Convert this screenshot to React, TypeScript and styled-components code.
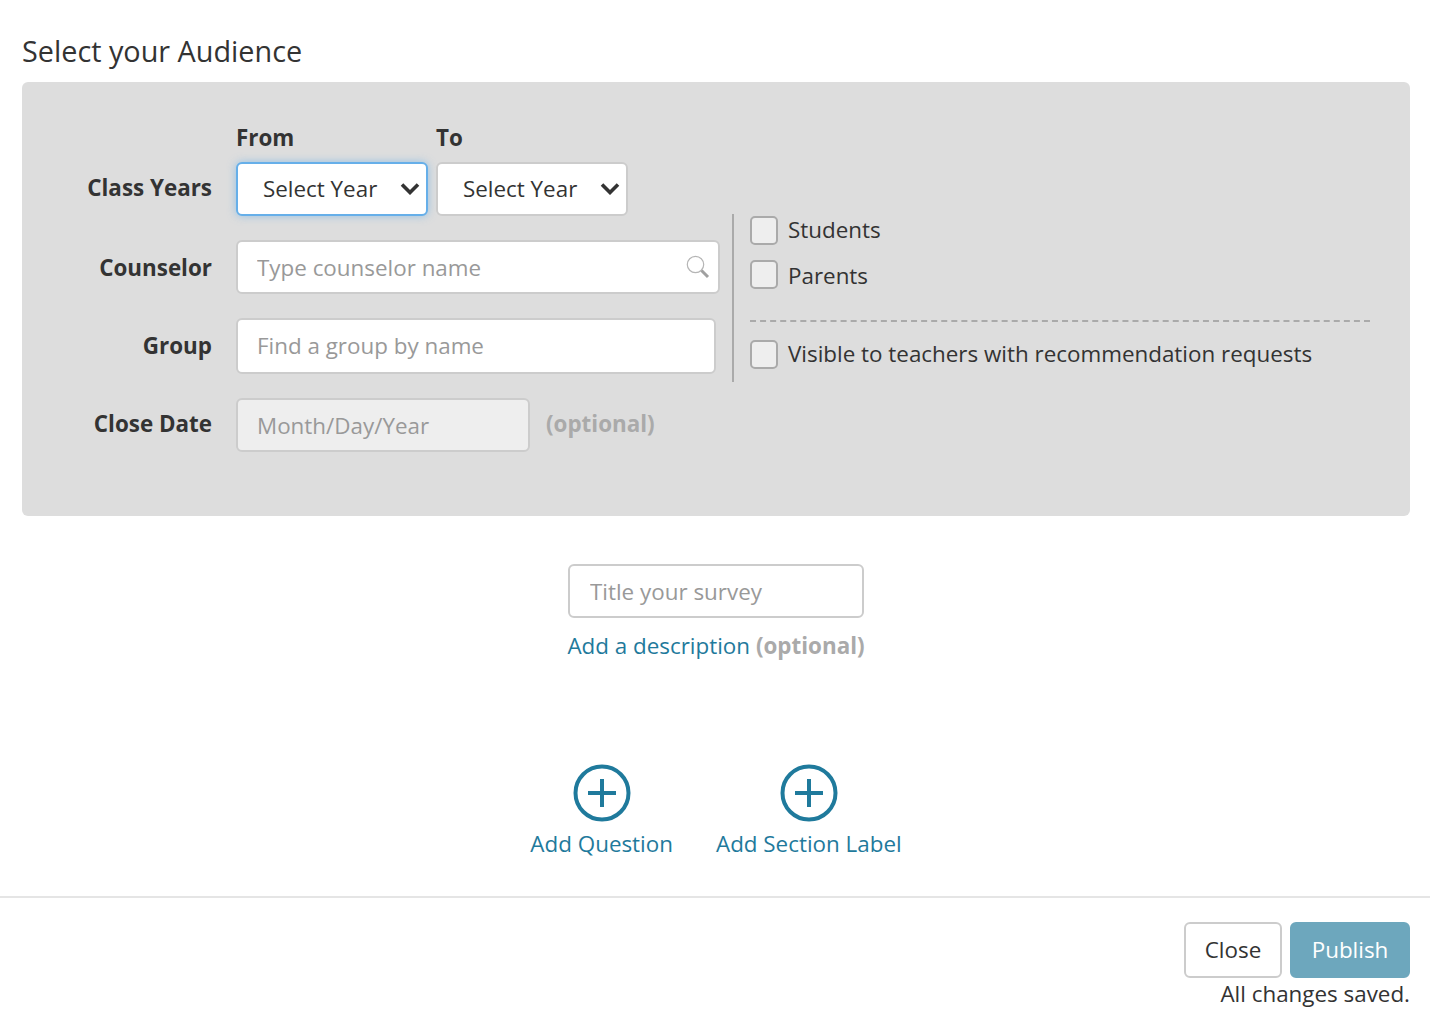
import styled, {createGlobalStyle} from "styled-components";

const GlobalStyle = createGlobalStyle`
    html, body {
        margin: 0;
        padding: 0;
        background: #fff;
        font-family: "Open Sans", "Liberation Sans", sans-serif;
        color: #333;
    }
`

function App() {
    return (
        <>
            <GlobalStyle/>
            <StyledPage>
                <StyledHeading>Select your Audience</StyledHeading>
                <AudiencePanel/>
                <SurveyTitle/>
                <AddActions/>
                <Footer/>
            </StyledPage>
        </>
    )
}

function AudiencePanel() {
    return (
        <StyledPanel>
            <StyledFields>
                <StyledColumnTitles>
                    <StyledColumnTitle>From</StyledColumnTitle>
                    <StyledColumnTitle>To</StyledColumnTitle>
                </StyledColumnTitles>
                <StyledRow $mb={24}>
                    <StyledRowLabel $shift={-2}>Class Years</StyledRowLabel>
                    <YearSelect focused/>
                    <YearSelect/>
                </StyledRow>
                <StyledRow $mb={24}>
                    <StyledRowLabel $shift={0}>Counselor</StyledRowLabel>
                    <StyledSearchBox>
                        <StyledInput $width={484} $height={54} placeholder="Type counselor name"/>
                        <StyledSearchIcon viewBox="0 0 24 24" fill="none">
                            <circle cx="9.5" cy="9.5" r="8.2" stroke="#b5b5b5" strokeWidth="1.2"/>
                            <path d="M15.5 15.5l6.5 6.5" stroke="#a0a0a0" strokeWidth="3"/>
                        </StyledSearchIcon>
                    </StyledSearchBox>
                </StyledRow>
                <StyledRow $mb={24}>
                    <StyledRowLabel $shift={-1}>Group</StyledRowLabel>
                    <StyledInput $width={480} $height={56} $pb={2} placeholder="Find a group by name"/>
                </StyledRow>
                <StyledRow $mb={0}>
                    <StyledRowLabel $shift={-2}>Close Date</StyledRowLabel>
                    <StyledDateInput $width={294} $height={54} placeholder="Month/Day/Year" disabled/>
                    <StyledOptional>(optional)</StyledOptional>
                </StyledRow>
            </StyledFields>
            <StyledRecipients>
                <StyledCheckRow $mb={15}>
                    <StyledCheckbox type="checkbox"/>
                    <StyledCheckText $top={-1}>Students</StyledCheckText>
                </StyledCheckRow>
                <StyledCheckRow $mb={0}>
                    <StyledCheckbox type="checkbox"/>
                    <StyledCheckText $top={1}>Parents</StyledCheckText>
                </StyledCheckRow>
                <StyledDashedLine/>
                <StyledCheckRow $mb={0}>
                    <StyledCheckbox type="checkbox"/>
                    <StyledCheckText $top={-1}>Visible to teachers with recommendation requests</StyledCheckText>
                </StyledCheckRow>
            </StyledRecipients>
        </StyledPanel>
    )
}

function YearSelect({focused}: {focused?: boolean}) {
    return (
        <StyledSelectBox>
            <StyledSelect $focused={focused}>
                <option>Select Year</option>
            </StyledSelect>
            <StyledChevron viewBox="0 0 20 13" fill="none">
                <path d="M2 2.5l8 8 8-8" stroke="#333" strokeWidth="3.6"/>
            </StyledChevron>
        </StyledSelectBox>
    )
}

function SurveyTitle() {
    return (
        <StyledSurveyTitle>
            <StyledTitleInput placeholder="Title your survey"/>
            <StyledDescription>
                <StyledLink>Add a description</StyledLink> <StyledDescOptional>(optional)</StyledDescOptional>
            </StyledDescription>
        </StyledSurveyTitle>
    )
}

function AddActions() {
    return (
        <StyledActions>
            <AddAction label="Add Question"/>
            <AddAction label="Add Section Label"/>
        </StyledActions>
    )
}

function AddAction({label}: {label: string}) {
    return (
        <StyledAction>
            <svg width="58" height="58" viewBox="0 0 58 58" fill="none">
                <circle cx="29" cy="29" r="26.5" stroke="#1f7a9c" strokeWidth="4"/>
                <path d="M15 29h28M29 15v28" stroke="#1f7a9c" strokeWidth="4"/>
            </svg>
            <StyledLink>{label}</StyledLink>
        </StyledAction>
    )
}

function Footer() {
    return (
        <StyledFooter>
            <StyledButtons>
                <StyledCloseButton>Close</StyledCloseButton>
                <StyledPublishButton>Publish</StyledPublishButton>
            </StyledButtons>
            <StyledSaved>All changes saved.</StyledSaved>
        </StyledFooter>
    )
}

const StyledPage = styled.div`
    width: 1430px;
    height: 1030px;
    overflow: hidden;
    padding-top: 31px;
    box-sizing: border-box;
`
const StyledHeading = styled.h1`
    margin: 0 0 11px 22px;
    height: 40px;
    line-height: 40px;
    font-size: 28.8px;
    font-weight: 400;
    color: #333;
`
const StyledPanel = styled.div`
    display: flex;
    align-items: flex-start;
    box-sizing: border-box;
    width: 1388px;
    height: 434px;
    margin-left: 22px;
    background: #ddd;
    border-radius: 6px;
`
const StyledFields = styled.div`
    width: 710px;
    flex: none;
    padding-top: 40px;
`
const StyledColumnTitles = styled.div`
    display: flex;
    height: 32px;
    margin: 0 0 8px 214px;
`
const StyledColumnTitle = styled.div`
    width: 200px;
    font-size: 22.4px;
    font-weight: 700;
    line-height: 32px;
    color: #333;
`
const StyledRow = styled.div<{$mb: number}>`
    display: flex;
    align-items: center;
    gap: 8px;
    margin-bottom: ${props => props.$mb}px;
`
const StyledRowLabel = styled.label<{$shift: number}>`
    width: 190px;
    margin: ${props => props.$shift * 2}px 16px 0 0;
    text-align: right;
    font-size: 22.4px;
    font-weight: 700;
    color: #333;
`
const StyledSelectBox = styled.div`
    position: relative;
    width: 192px;
    height: 54px;
`
const StyledSelect = styled.select<{$focused?: boolean}>`
    appearance: none;
    width: 100%;
    height: 100%;
    box-sizing: border-box;
    padding: 0 0 2px 25px;
    background: #fff;
    border: 2px solid ${props => props.$focused ? "#66afe9" : "#ccc"};
    border-radius: 6px;
    box-shadow: ${props => props.$focused ? "0 0 8px rgba(102, 175, 233, 0.6)" : "none"};
    font-family: inherit;
    font-size: 22.4px;
    color: #333;
    outline: none;
`
const StyledChevron = styled.svg`
    position: absolute;
    top: 20px;
    right: 8px;
    width: 20px;
    height: 13px;
`
const StyledInput = styled.input<{$width: number, $height: number, $pb?: number}>`
    display: block;
    width: ${props => props.$width}px;
    height: ${props => props.$height}px;
    box-sizing: border-box;
    padding: 0 19px ${props => props.$pb ?? 0}px;
    background: #fff;
    border: 2px solid #ccc;
    border-radius: 6px;
    font-family: inherit;
    font-size: 22.4px;
    color: #333;
    outline: none;
    &::placeholder {
        color: #999;
        opacity: 1;
    }
`
const StyledDateInput = styled(StyledInput)`
    background: #eee;
`
const StyledSearchBox = styled.div`
    position: relative;
`
const StyledSearchIcon = styled.svg`
    position: absolute;
    top: 15px;
    right: 10px;
    width: 24px;
    height: 24px;
`
const StyledOptional = styled.span`
    margin: -4px 0 0 8px;
    font-size: 22.4px;
    font-weight: 700;
    color: #aaa;
`
const StyledRecipients = styled.div`
    flex: 1;
    box-sizing: border-box;
    height: 168px;
    margin: 132px 40px 0 0;
    padding: 2px 0 0 16px;
    border-left: 2px solid #aaa;
`
const StyledCheckRow = styled.label<{$mb: number}>`
    display: flex;
    align-items: center;
    gap: 10px;
    height: 29px;
    margin-bottom: ${props => props.$mb}px;
    font-size: 22.4px;
    color: #333;
`
const StyledCheckText = styled.span<{$top: number}>`
    margin-top: ${props => props.$top * 2}px;
`
const StyledCheckbox = styled.input`
    appearance: none;
    flex: none;
    width: 28px;
    height: 29px;
    margin: 0;
    background: #eee;
    border: 2px solid #aaa;
    border-radius: 5px;
`
const StyledDashedLine = styled.div`
    margin: 31px 0 18px;
    border-top: 2px dashed #aaa;
`
const StyledSurveyTitle = styled.div`
    display: flex;
    flex-direction: column;
    align-items: center;
    width: 1432px;
    margin-top: 48px;
`
const StyledTitleInput = styled.input`
    width: 296px;
    height: 54px;
    box-sizing: border-box;
    padding: 0 20px;
    border: 2px solid #ccc;
    border-radius: 6px;
    font-family: inherit;
    font-size: 22.4px;
    outline: none;
    &::placeholder {
        color: #999;
        opacity: 1;
    }
`
const StyledDescription = styled.div`
    margin-top: 12px;
    font-size: 22.4px;
    line-height: 32px;
`
const StyledLink = styled.a`
    font-size: 22.4px;
    color: #1f7a9c;
`
const StyledDescOptional = styled.span`
    font-weight: 700;
    color: #aaa;
`
const StyledActions = styled.div`
    display: flex;
    justify-content: center;
    gap: 43px;
    width: 1432px;
    margin-top: 102px;
`
const StyledAction = styled.div`
    display: flex;
    flex-direction: column;
    align-items: center;
    gap: 6px;
    line-height: 32px;
`
const StyledFooter = styled.div`
    display: flex;
    flex-direction: column;
    align-items: flex-end;
    box-sizing: border-box;
    height: 134px;
    margin-top: 36px;
    padding: 24px 20px 0 0;
    border-top: 2px solid #e5e5e5;
`
const StyledButtons = styled.div`
    display: flex;
    gap: 8px;
`
const StyledCloseButton = styled.button`
    width: 98px;
    height: 56px;
    padding: 0 0 2px;
    background: #fff;
    border: 2px solid #ccc;
    border-radius: 6px;
    font-family: inherit;
    font-size: 22.4px;
    color: #333;
`
const StyledPublishButton = styled.button`
    width: 120px;
    height: 56px;
    padding: 0 0 2px;
    background: #6da7bd;
    border: 2px solid #6da7bd;
    border-radius: 6px;
    font-family: inherit;
    font-size: 22.4px;
    color: #fff;
`
const StyledSaved = styled.div`
    font-size: 22.4px;
    line-height: 32px;
    color: #333;
`

export default App;
